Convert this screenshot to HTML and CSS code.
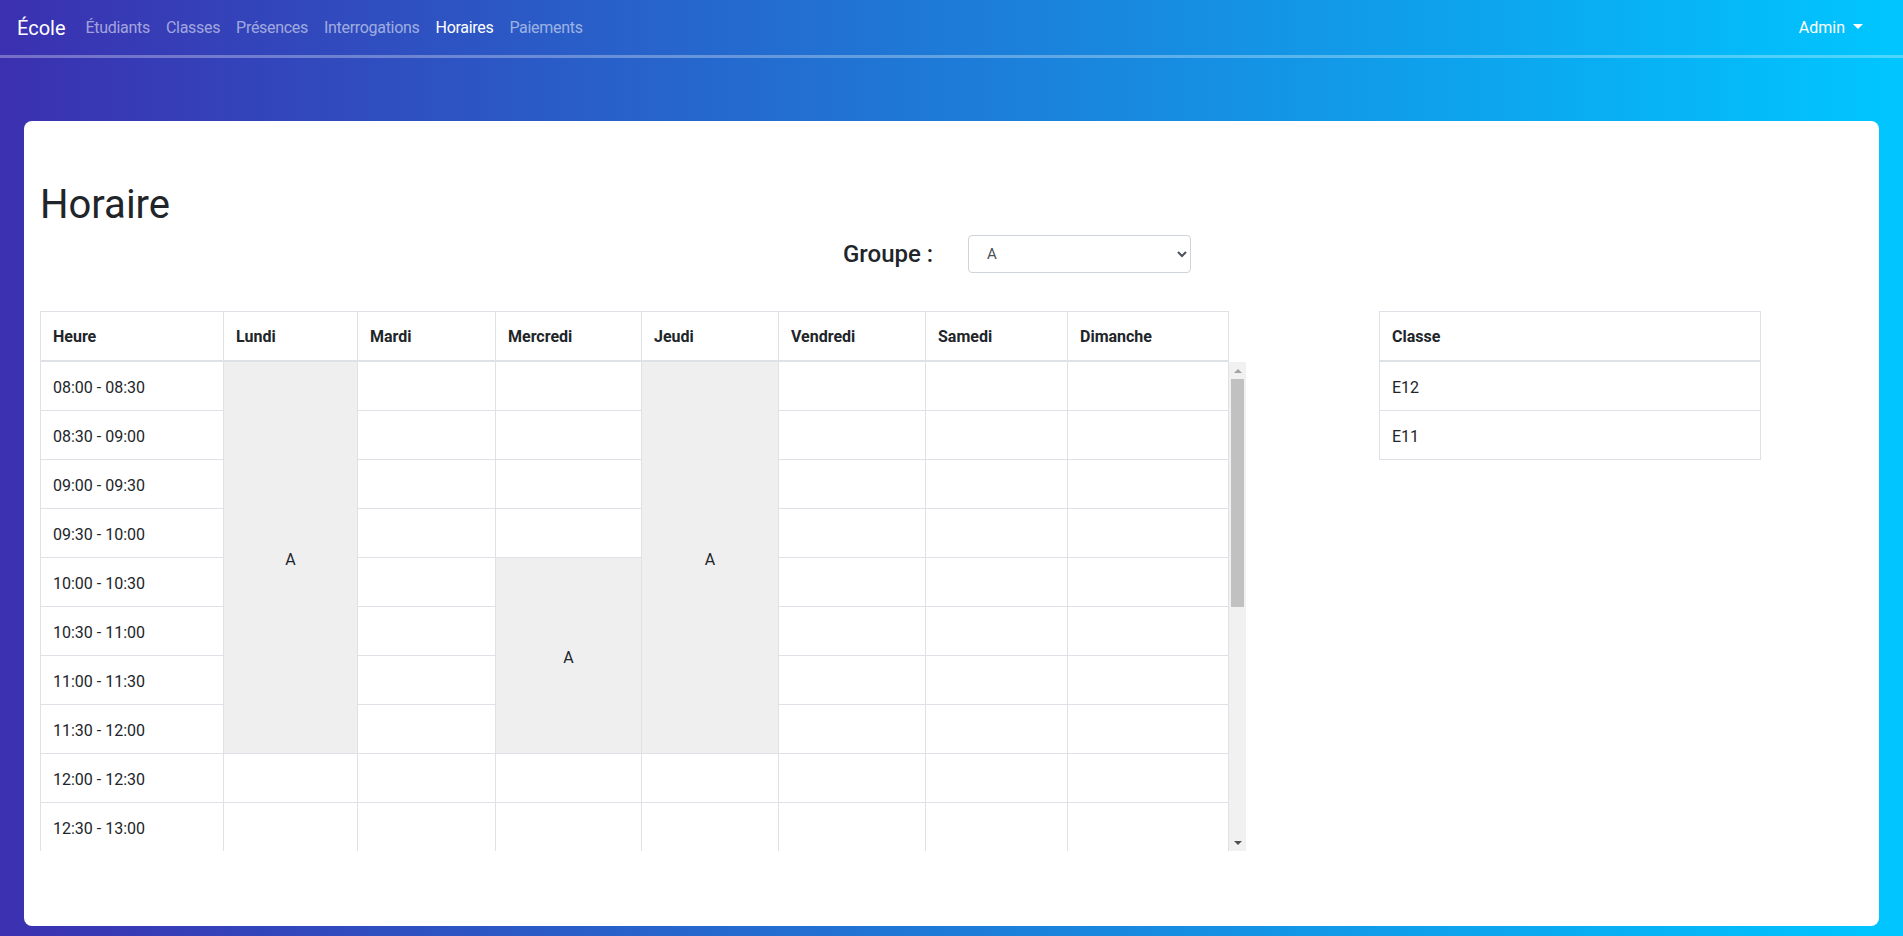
FILE: index.html
```html
<!DOCTYPE html>
<html lang="fr">
<head>
<meta charset="utf-8">
<title>Horaire</title>
<link rel="stylesheet" href="styles.css">
</head>
<body>
<nav class="navbar">
  <a class="brand" href="#">École</a>
  <ul class="nav-links">
    <li><a class="nav-link" href="#">Étudiants</a></li>
    <li><a class="nav-link" href="#">Classes</a></li>
    <li><a class="nav-link" href="#">Présences</a></li>
    <li><a class="nav-link" href="#">Interrogations</a></li>
    <li><a class="nav-link active" href="#">Horaires</a></li>
    <li><a class="nav-link" href="#">Paiements</a></li>
  </ul>
  <a class="admin" href="#">Admin</a>
</nav>

<main class="card">
  <h1 class="title">Horaire</h1>
  <div class="group-row">
    <label class="group-label" for="groupe">Groupe :</label>
    <select id="groupe" class="group-select">
      <option>A</option>
    </select>
  </div>

  <div class="content">
    <div class="timetable">
      <div class="tt-head">
        <div class="th">Heure</div>
        <div class="th">Lundi</div>
        <div class="th">Mardi</div>
        <div class="th">Mercredi</div>
        <div class="th">Jeudi</div>
        <div class="th">Vendredi</div>
        <div class="th">Samedi</div>
        <div class="th">Dimanche</div>
      </div>
      <div class="tt-body-wrap">
        <div class="tt-scroll">
          <div class="tt-body">
            <!-- 08:00 -->
            <div class="td">08:00 - 08:30</div>
            <div class="td slot span-8">A</div>
            <div class="td"></div>
            <div class="td"></div>
            <div class="td slot span-8">A</div>
            <div class="td"></div>
            <div class="td"></div>
            <div class="td"></div>
            <!-- 08:30 -->
            <div class="td">08:30 - 09:00</div>
            <div class="td"></div>
            <div class="td"></div>
            <div class="td"></div>
            <div class="td"></div>
            <div class="td"></div>
            <!-- 09:00 -->
            <div class="td">09:00 - 09:30</div>
            <div class="td"></div>
            <div class="td"></div>
            <div class="td"></div>
            <div class="td"></div>
            <div class="td"></div>
            <!-- 09:30 -->
            <div class="td">09:30 - 10:00</div>
            <div class="td"></div>
            <div class="td"></div>
            <div class="td"></div>
            <div class="td"></div>
            <div class="td"></div>
            <!-- 10:00 -->
            <div class="td">10:00 - 10:30</div>
            <div class="td"></div>
            <div class="td slot span-4">A</div>
            <div class="td"></div>
            <div class="td"></div>
            <div class="td"></div>
            <!-- 10:30 -->
            <div class="td">10:30 - 11:00</div>
            <div class="td"></div>
            <div class="td"></div>
            <div class="td"></div>
            <div class="td"></div>
            <!-- 11:00 -->
            <div class="td">11:00 - 11:30</div>
            <div class="td"></div>
            <div class="td"></div>
            <div class="td"></div>
            <div class="td"></div>
            <!-- 11:30 -->
            <div class="td">11:30 - 12:00</div>
            <div class="td"></div>
            <div class="td"></div>
            <div class="td"></div>
            <div class="td"></div>
            <!-- 12:00 -->
            <div class="td">12:00 - 12:30</div>
            <div class="td"></div><div class="td"></div><div class="td"></div><div class="td"></div><div class="td"></div><div class="td"></div><div class="td"></div>
            <div class="td">12:30 - 13:00</div>
            <div class="td"></div><div class="td"></div><div class="td"></div><div class="td"></div><div class="td"></div><div class="td"></div><div class="td"></div>
            <div class="td">13:00 - 13:30</div>
            <div class="td"></div><div class="td"></div><div class="td"></div><div class="td"></div><div class="td"></div><div class="td"></div><div class="td"></div>
            <div class="td">13:30 - 14:00</div>
            <div class="td"></div><div class="td"></div><div class="td"></div><div class="td"></div><div class="td"></div><div class="td"></div><div class="td"></div>
            <div class="td">14:00 - 14:30</div>
            <div class="td"></div><div class="td"></div><div class="td"></div><div class="td"></div><div class="td"></div><div class="td"></div><div class="td"></div>
            <div class="td">14:30 - 15:00</div>
            <div class="td"></div><div class="td"></div><div class="td"></div><div class="td"></div><div class="td"></div><div class="td"></div><div class="td"></div>
            <div class="td">15:00 - 15:30</div>
            <div class="td"></div><div class="td"></div><div class="td"></div><div class="td"></div><div class="td"></div><div class="td"></div><div class="td"></div>
            <div class="td">15:30 - 16:00</div>
            <div class="td"></div><div class="td"></div><div class="td"></div><div class="td"></div><div class="td"></div><div class="td"></div><div class="td"></div>
            <div class="td">16:00 - 16:30</div>
            <div class="td"></div><div class="td"></div><div class="td"></div><div class="td"></div><div class="td"></div><div class="td"></div><div class="td"></div>
            <div class="td">16:30 - 17:00</div>
            <div class="td"></div><div class="td"></div><div class="td"></div><div class="td"></div><div class="td"></div><div class="td"></div><div class="td"></div>
            <div class="td">17:00 - 17:30</div>
            <div class="td"></div><div class="td"></div><div class="td"></div><div class="td"></div><div class="td"></div><div class="td"></div><div class="td"></div>
            <div class="td">17:30 - 18:00</div>
            <div class="td"></div><div class="td"></div><div class="td"></div><div class="td"></div><div class="td"></div><div class="td"></div><div class="td"></div>
          </div>
        </div>
        <div class="vscroll" aria-hidden="true">
          <span class="vs-btn vs-up"></span>
          <span class="vs-thumb"></span>
          <span class="vs-rest"></span>
          <span class="vs-btn vs-down"></span>
        </div>
      </div>
    </div>

    <div class="classes">
      <div class="cl-th">Classe</div>
      <div class="cl-td">E12</div>
      <div class="cl-td">E11</div>
    </div>
  </div>
</main>
</body>
</html>
```

FILE: styles.css
```css
* {
  box-sizing: border-box;
}

html,
body {
  margin: 0;
  min-height: 100vh;
}

body {
  background: linear-gradient(to right, #3b30b0, #00c6ff);
  font-family: Roboto, "Liberation Sans", sans-serif;
  font-size: 16px;
  line-height: 1.5;
  color: #212529;
  overflow: hidden;
}

/* Navbar */
.navbar {
  height: 58px;
  display: flex;
  align-items: center;
  padding: 0 40px 0 17px;
  border-bottom: 3px solid rgba(255, 255, 255, 0.3);
}

.brand {
  font-size: 20px;
  color: #fff;
  text-decoration: none;
  margin-right: 12px;
}

.nav-links {
  display: flex;
  list-style: none;
  margin: 0;
  padding: 0;
}

.nav-link {
  display: block;
  padding: 8px;
  color: rgba(255, 255, 255, 0.55);
  text-decoration: none;
  letter-spacing: -0.3px;
}

.nav-link.active {
  color: #fff;
}

.admin {
  margin-left: auto;
  color: #fff;
  text-decoration: none;
}

.admin::after {
  content: "";
  display: inline-block;
  margin-left: 8px;
  vertical-align: 4px;
  border-top: 5px solid #fff;
  border-left: 5px solid transparent;
  border-right: 5px solid transparent;
}

/* Card */
.card {
  margin: 63px 24px 10px;
  background: #fff;
  border-radius: 8px;
  padding: 60px 16px 75px;
}

.title {
  margin: 0;
  font-size: 40px;
  font-weight: 400;
  line-height: 48px;
}

.group-row {
  display: flex;
  align-items: center;
  margin: 6px 0 0 803px;
  height: 38px;
}

.group-label {
  width: 125px;
  font-size: 24px;
  font-weight: 500;
  line-height: 29px;
}

.group-select {
  width: 223px;
  height: 38px;
  border: 1px solid #ced4da;
  border-radius: 4px;
  padding: 0 10px 0 14px;
  font-family: Roboto, "Liberation Sans", sans-serif;
  font-size: 15px;
  color: #495057;
  background-color: #fff;
}

/* Layout of tables */
.content {
  display: grid;
  grid-template-columns: 1206px 382px;
  column-gap: 133px;
  align-items: start;
  margin-top: 38px;
}

/* Timetable */
.tt-head,
.tt-body {
  display: grid;
  grid-template-columns: 183px 134px 138px 146px 137px 147px 142px 161px;
  width: 1189px;
  border-left: 1px solid #dee2e6;
}

.tt-head {
  border-top: 1px solid #dee2e6;
}

.th {
  padding: 13px 12px 11px;
  line-height: 24px;
  font-weight: 700;
  border-right: 1px solid #dee2e6;
  border-bottom: 2px solid #dee2e6;
}

.tt-body-wrap {
  display: flex;
  height: 489px;
}

.tt-scroll {
  width: 1189px;
  height: 489px;
  overflow-y: auto;
  overflow-x: hidden;
  scrollbar-width: none;
}

.tt-body {
  grid-auto-rows: 49px;
}

.td {
  padding: 14px 12px 10px;
  line-height: 24px;
  border-right: 1px solid #dee2e6;
  border-bottom: 1px solid #dee2e6;
  white-space: nowrap;
}

.td.slot {
  background: #efefef;
  display: flex;
  align-items: center;
  justify-content: center;
}

.span-8 {
  grid-row: span 8;
}

.span-4 {
  grid-row: span 4;
}

/* Drawn scrollbar beside the scrolling body */
.vscroll {
  width: 17px;
  height: 489px;
  background: #f1f1f1;
  display: flex;
  flex-direction: column;
}

.vs-btn {
  height: 17px;
  flex: none;
  display: flex;
  align-items: center;
  justify-content: center;
}

.vs-btn::before {
  content: "";
  border-left: 4px solid transparent;
  border-right: 4px solid transparent;
}

.vs-up::before {
  border-bottom: 4px solid #a3a3a3;
}

.vs-down::before {
  border-top: 4px solid #505050;
}

.vs-thumb {
  height: 228px;
  flex: none;
  margin: 0 2px;
  background: #c1c1c1;
}

.vs-rest {
  flex: 1;
}

/* Classe table */
.classes {
  width: 382px;
  border-left: 1px solid #dee2e6;
  border-top: 1px solid #dee2e6;
}

.cl-th,
.cl-td {
  line-height: 24px;
  border-right: 1px solid #dee2e6;
}

.cl-th {
  padding: 13px 12px 11px;
  font-weight: 700;
  border-bottom: 2px solid #dee2e6;
}

.cl-td {
  padding: 14px 12px 10px;
  height: 49px;
  border-bottom: 1px solid #dee2e6;
}
```
